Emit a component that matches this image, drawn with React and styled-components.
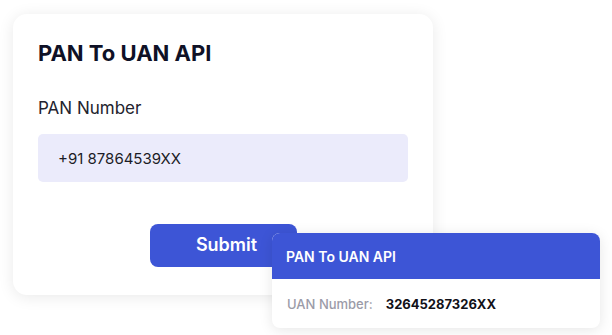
import React from 'react';
import styled, { createGlobalStyle } from 'styled-components';

const GlobalStyle = createGlobalStyle`
    body {
        margin: 0;
        background: #ffffff;
        font-family: Inter, "Noto Sans", sans-serif;
    }
`;

function App() {
    return (
        <>
            <GlobalStyle />
            <StStage>
                <StFormCard>
                    <StTitle>PAN To UAN API</StTitle>
                    <StLabel>PAN Number</StLabel>
                    <StInputBox>+91 87864539XX</StInputBox>
                    <StButtonRow>
                        <StSubmit>Submit</StSubmit>
                    </StButtonRow>
                </StFormCard>
                <StResultCard>
                    <StResultHead>PAN To UAN API</StResultHead>
                    <StResultBody>
                        <StKey>UAN Number:</StKey>
                        <StValue>32645287326XX</StValue>
                    </StResultBody>
                </StResultCard>
            </StStage>
        </>
    );
}

export default App;

const StStage = styled.div`
    position: relative;
    width: 612px;
    height: 335px;
    padding: 14px 0 0 13px;
    box-sizing: border-box;
    overflow: hidden;
`;

const StFormCard = styled.div`
    width: 420px;
    height: 281px;
    box-sizing: border-box;
    padding: 25px 25px 0 25px;
    background-color: #ffffff;
    border-radius: 14px;
    box-shadow: rgba(0, 0, 0, 0.09) 0px 2px 16px;
    display: flex;
    flex-direction: column;
`;

const StTitle = styled.h1`
    margin: 0;
    font-size: 22px;
    line-height: 28px;
    font-weight: 700;
    color: #0f1126;
`;

const StLabel = styled.div`
    margin-top: 31px;
    font-size: 17px;
    line-height: 20px;
    color: #23232e;
`;

const StInputBox = styled.div`
    margin-top: 16px;
    width: 370px;
    height: 48px;
    box-sizing: border-box;
    padding: 0 20px;
    display: flex;
    align-items: center;
    background-color: #ebebfb;
    border-radius: 5px;
    font-size: 15px;
    color: #1c1c26;
`;

const StButtonRow = styled.div`
    margin-top: 42px;
    padding-left: 112px;
    display: flex;
`;

const StSubmit = styled.button`
    width: 147px;
    height: 43px;
    border: none;
    border-radius: 8px;
    background-color: #3d55d6;
    color: #ffffff;
    font-family: Inter, "Noto Sans", sans-serif;
    font-size: 18px;
    font-weight: 600;
    padding: 0 0 2px 6px;
    text-align: center;
`;

const StResultCard = styled.div`
    position: absolute;
    left: 272px;
    top: 233px;
    width: 328px;
    height: 95px;
    background-color: #ffffff;
    border-radius: 8px;
    overflow: hidden;
    box-shadow: rgba(0, 0, 0, 0.1) 0px 2px 14px;
`;

const StResultHead = styled.div`
    height: 46px;
    padding-left: 14px;
    display: flex;
    align-items: center;
    background-color: #3d55d6;
    color: #ffffff;
    font-size: 14px;
    font-weight: 600;
`;

const StResultBody = styled.div`
    height: 49px;
    padding-left: 15px;
    display: flex;
    align-items: center;
    gap: 13px;
    font-size: 13px;
`;

const StKey = styled.span`
    color: #9b9ba8;
    font-weight: 500;
`;

const StValue = styled.span`
    color: #111118;
    font-weight: 700;
`;
